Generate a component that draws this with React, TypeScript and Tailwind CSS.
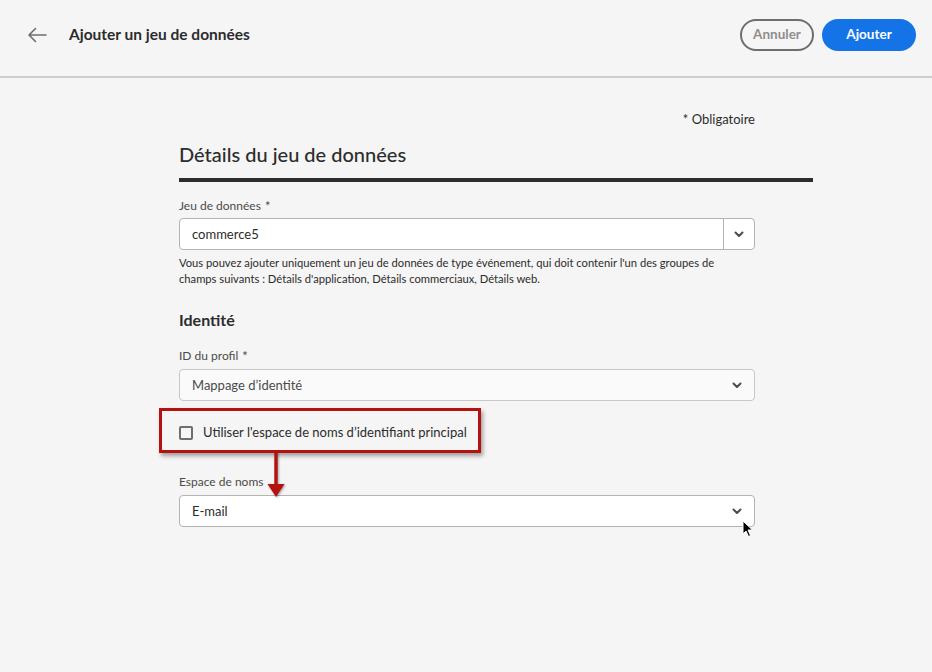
import type { ReactNode } from 'react';

const FONT = { fontFamily: 'Lato, "Open Sans", sans-serif' };

function Chevron() {
  return (
    <svg width="12" height="12" viewBox="0 0 12 12" className="text-[#4b4b4b]">
      <path d="M2.5 4.5 6 8l3.5-3.5" fill="none" stroke="currentColor" strokeWidth="2" strokeLinecap="round" strokeLinejoin="round" />
    </svg>
  );
}

function Label({ children, required }: { children: ReactNode; required?: boolean }) {
  return (
    <div className="flex items-center gap-1 text-[12px] leading-4 text-[#4b4b4b]">
      {children}
      {required && <span className="text-[13px] leading-4">*</span>}
    </div>
  );
}

// Cursor souris (dessin)
function Cursor() {
  return (
    <svg width="12" height="18" viewBox="0 0 12 18" className="absolute left-[742px] top-[520px]">
      <path d="M1 1v13l3-3 2.5 5.5 2-1L6 10h4.5z" fill="#000" stroke="#fff" strokeWidth="1" />
    </svg>
  );
}

export default function App() {
  return (
    <div className="relative min-h-[672px] w-[932px] bg-[#f5f5f5] text-[#2c2c2c]" style={FONT}>
      {/* barre d'en-tête */}
      <header className="flex h-[78px] items-center border-b-2 border-[#cdcdcd] pb-[7px] pl-[27px] pr-[16px]">
        <svg width="20" height="16" viewBox="0 0 20 16" className="text-[#6e6e6e]">
          <path d="M19 8H2M8.5 1.5 2 8l6.5 6.5" fill="none" stroke="currentColor" strokeWidth="1.6" strokeLinecap="round" strokeLinejoin="round" />
        </svg>
        <h1 className="ml-[22px] text-[15.5px] font-bold">Ajouter un jeu de données</h1>
        <div className="ml-auto flex items-center gap-2">
          <button className="h-8 w-[74px] rounded-full border-2 border-[#6e6e6e] text-[13.5px] font-bold text-[#8e8e8e]">
            Annuler
          </button>
          <button className="h-8 w-[94px] rounded-full bg-[#1473e6] text-[13.5px] font-bold text-white">
            Ajouter
          </button>
        </div>
      </header>

      <main className="ml-[179px] w-[634px] pt-[31px]">
        <div className="w-[576px] text-right text-[13px] leading-5">* Obligatoire</div>
        <h2 className="mt-[11px] text-[20px] font-medium leading-7">Détails du jeu de données</h2>
        <div className="mt-[10px] h-[4px] bg-[#2c2c2c]" />

        <div className="w-[576px]">
          <div className="mt-[16px]">
            <Label required>Jeu de données</Label>
          </div>
          <div className="mt-[4px] flex h-8 rounded-[4px] border border-[#b3b3b3] bg-white">
            <div className="flex flex-1 items-center px-[12px] pt-[2px] text-[13px]">commerce5</div>
            <div className="flex w-[31px] items-center justify-center border-l border-[#b3b3b3]">
              <Chevron />
            </div>
          </div>
          <p className="mt-[5px] text-[11.2px] leading-4 text-[#2c2c2c]">
            Vous pouvez ajouter uniquement un jeu de données de type événement, qui doit contenir l'un des groupes de
            <br />
            champs suivants : Détails d'application, Détails commerciaux, Détails web.
          </p>

          <h3 className="mt-[22px] text-[16px] font-bold leading-[22px]">Identité</h3>

          <div className="mt-[17px]">
            <Label required>ID du profil</Label>
          </div>
          <div className="mt-[5px] flex h-8 items-center justify-between rounded-[4px] border border-[#c8c8c8] bg-[#fafafa] pl-[12px] pr-[11px]">
            <span className="pt-[2px] text-[13px] text-[#4b4b4b]">Mappage d’identité</span>
            <Chevron />
          </div>

          <div className="relative mt-[22px] flex h-5 items-center">
            <div className="absolute -left-[20px] -top-[15px] h-[45px] w-[322px] border-[3px] border-[#b5120f] shadow-[2px_3px_4px_rgba(0,0,0,0.35)]" />
            <span className="h-[14px] w-[14px] rounded-[2px] border-2 border-[#6e6e6e] bg-[#f5f5f5]" />
            <span className="ml-[10px] text-[13px] text-[#2c2c2c]">Utiliser l'espace de noms d’identifiant principal</span>
            {/* flèche d'annotation */}
            <svg width="20" height="46" viewBox="0 0 20 46" className="absolute left-[87px] top-[29px] drop-shadow-[1px_1px_1px_rgba(0,0,0,0.35)]">
              <path d="M8.3 0h3.4v34h-3.4z" fill="#b5120f" />
              <path d="M1.5 32h17L10 45z" fill="#b5120f" />
            </svg>
          </div>

          <div className="mt-[31px]">
            <Label>Espace de noms</Label>
          </div>
          <div className="mt-[5px] flex h-8 items-center justify-between rounded-[4px] border border-[#b3b3b3] bg-white pl-[12px] pr-[11px]">
            <span className="pt-[2px] text-[13px]">E-mail</span>
            <Chevron />
          </div>
        </div>
      </main>
      <Cursor />
    </div>
  );
}
